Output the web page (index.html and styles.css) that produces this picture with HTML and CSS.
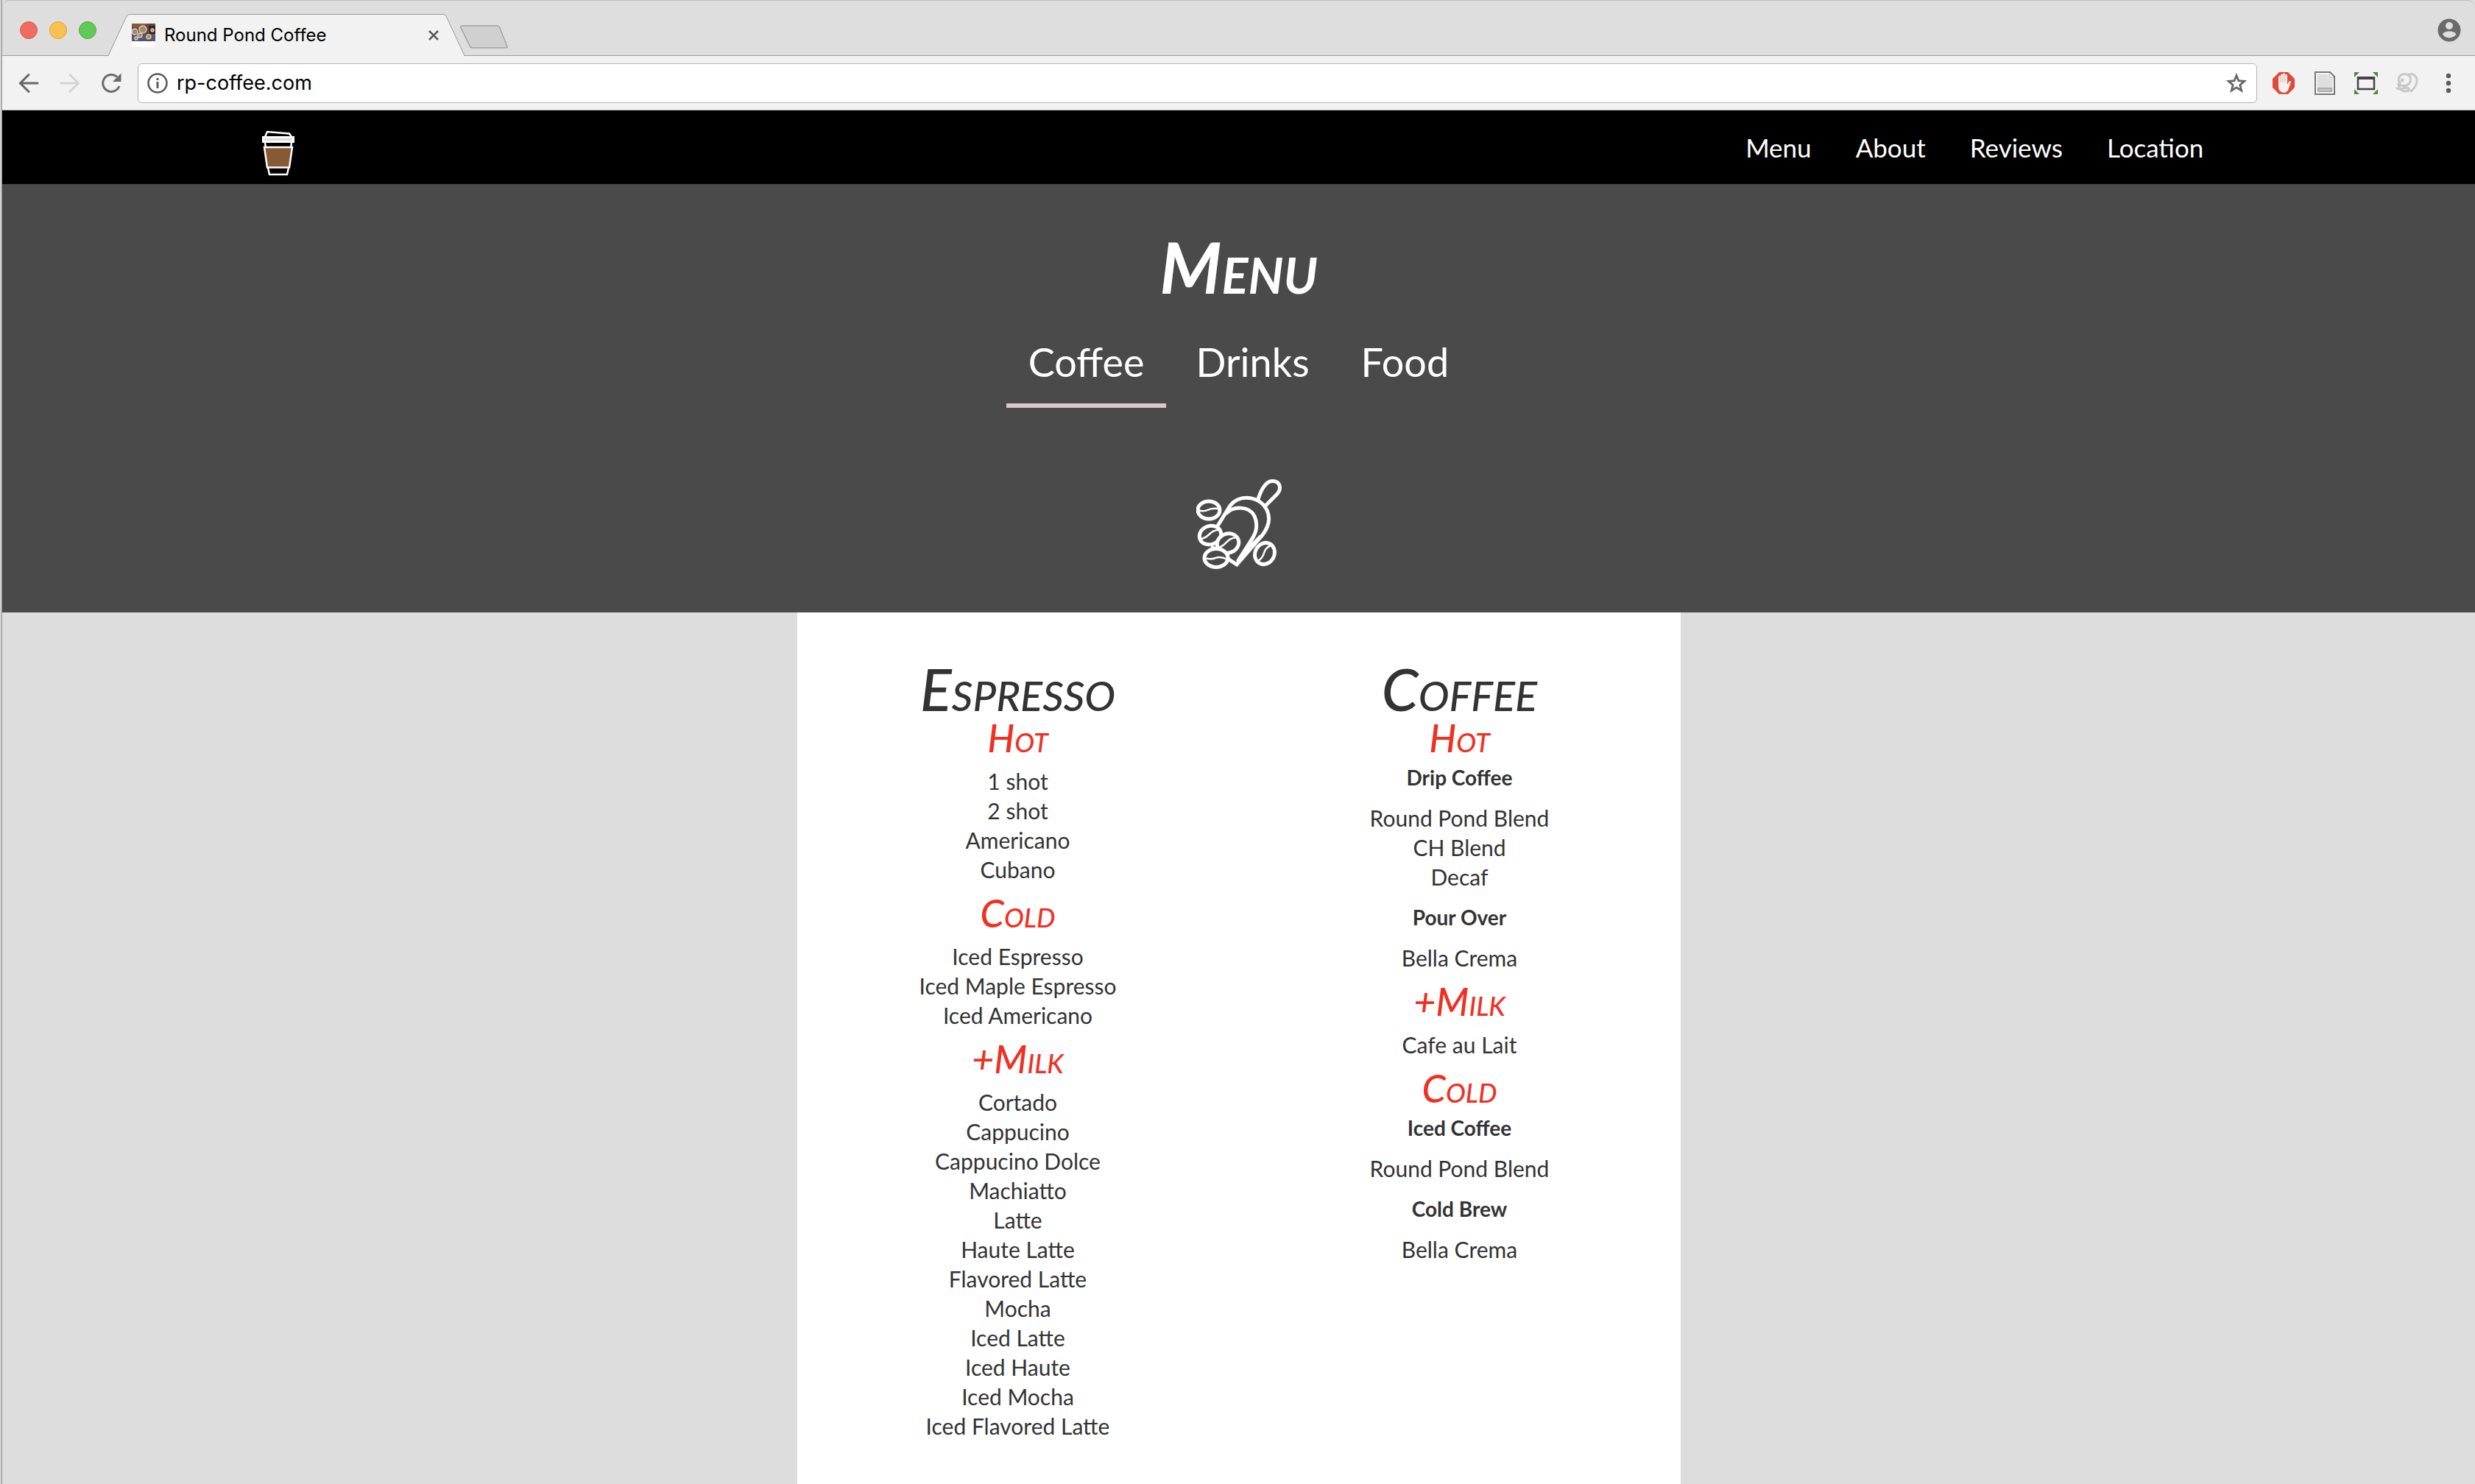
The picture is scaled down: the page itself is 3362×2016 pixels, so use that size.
FILE: index.html
```html
<!DOCTYPE html>
<html lang="en">
<head>
<meta charset="utf-8">
<title>Round Pond Coffee</title>
<link rel="stylesheet" href="styles.css">
</head>
<body>
<div class="window">
  <header class="chrome">
    <div class="tabstrip">
      <div class="lights">
        <button class="light light-close" aria-label="Close window"></button>
        <button class="light light-min" aria-label="Minimize"></button>
        <button class="light light-max" aria-label="Full screen"></button>
      </div>
      <div class="tab">
        <svg class="tab-shape" width="484" height="57" viewBox="0 0 484 57" aria-hidden="true"><path d="M0 57 L1 56 L25 3 Q26 .5 29 .5 H455 Q458 .5 459 3 L483 56 L484 57Z" fill="#f2f2f2"/><path d="M0 56.500 L25 3 Q26 .5 29 .5 H455 Q458 .5 459 3 L484 56.500" fill="none" stroke="#9a9a9a"/></svg>
        <svg class="favicon" width="32" height="32" viewBox="0 0 32 32" aria-hidden="true"><path fill="#fff" d="M0 0h32v32H0z"/><path fill="#5c4a48" d="M0 0h32v24H0z"/><path fill="#8a5a35" d="M0 0h22L12 6 0 4z"/><path fill="#401e1a" d="M23 3h9v11h-8z"/><path fill="#505a72" d="M0 15h8l3 9H0zM13 14l9 2-3 8h-6zM25 15h7v9h-5z"/><g fill="#a58a6b" stroke="#d8c9b5" stroke-width="1.500"><circle cx="4" cy="11" r="4"/><circle cx="15" cy="8" r="5"/><circle cx="11" cy="16" r="3"/><circle cx="23" cy="18" r="3"/><circle cx="6" cy="20" r="2"/><circle cx="28" cy="9" r="2"/></g></svg>
        <span class="tab-title">Round Pond Coffee</span>
        <button class="tab-close" aria-label="Close tab"><svg width="16" height="16" viewBox="0 0 16 16"><path d="M2 2l12 12M14 2L2 14" stroke="#5a5a5a" stroke-width="2.500"/></svg></button>
      </div>
      <button class="newtab" aria-label="New tab"><svg width="66" height="34" viewBox="0 0 66 34"><path d="M3 1H50Q53 1 54 4L64 29Q65 31 62 31H17Q14 31 13 28L1 4Q0 1 3 1Z" fill="#d0d0d0" stroke="#a2a2a2" stroke-width="1.500"/></svg></button>
      <button class="profile" aria-label="Profile"><svg width="32" height="32" viewBox="0 0 32 32"><circle cx="16" cy="16" r="15.500" fill="#6b6b6b"/><circle cx="16" cy="10" r="5" fill="#dedede"/><path d="M7 21.500C9 16 23 16 25.500 21.500C21 28 11 28 7 21.500Z" fill="#dedede"/></svg></button>
    </div>
    <div class="toolbar">
      <button class="tool" aria-label="Back"><svg width="28" height="28" viewBox="0 0 28 28" fill="none" stroke="#666" stroke-width="3" stroke-linecap="round"><path d="M26 14H3M14 2.500L2.500 14L14 25.500"/></svg></button>
      <button class="tool" aria-label="Forward" disabled><svg width="28" height="28" viewBox="0 0 28 28" fill="none" stroke="#d4d4d4" stroke-width="3" stroke-linecap="round"><path d="M2 14H25M14 2.500L25.500 14L14 25.500"/></svg></button>
      <button class="tool" aria-label="Reload"><svg width="28" height="28" viewBox="0 0 28 28"><path d="M22 5.500A11.500 11.500 0 1 0 25 18" fill="none" stroke="#6b6b6b" stroke-width="3"/><path d="M27.500 .5V12H16Z" fill="#6b6b6b"/></svg></button>
      <div class="omnibox">
        <svg width="28" height="28" viewBox="0 0 28 28" aria-hidden="true"><circle cx="14" cy="14" r="12.500" fill="none" stroke="#5a5a5a" stroke-width="2.500"/><path d="M12.500 7h3v3h-3zM12.500 12h3v9h-3z" fill="#5a5a5a"/></svg>
        <input class="url" type="text" value="rp-coffee.com" aria-label="Address">
        <button class="star" aria-label="Bookmark"><svg width="30" height="30" viewBox="0 0 30 30"><path d="M15 4.500L17.900 11.700L25.700 12.300L19.800 17.400L21.700 25L15 20.900L8.300 25L10.200 17.400L4.300 12.300L12.100 11.700Z" fill="none" stroke="#666" stroke-width="2.800"/></svg></button>
      </div>
      <div class="extensions">
        <button class="ext" aria-label="Ad blocker"><svg width="32" height="32" viewBox="0 0 32 32"><path d="M10 1H22L31 10V22L22 31H10L1 22V10Z" fill="#e14a38"/><path d="M9 20V7.500a1.500 1.500 0 0 1 3 0V5a1.500 1.500 0 0 1 3 0V4a1.500 1.500 0 0 1 3 0V5.500a1.500 1.500 0 0 1 3 0V18l2-4q1.500-2 3 0L23 23Q21 29 16 29Q9 28 9 20Z" fill="#f4f0ef"/><path d="M12 7v8M15 5v10M18 5v10" stroke="#d3b0ac"/></svg></button>
        <button class="ext" aria-label="Document"><svg width="32" height="32" viewBox="0 0 32 32"><path d="M3 1H23L29 7V31H3Z" fill="#fff" stroke="#777" stroke-width="2"/><path d="M5.500 3.500H20L21 9H26.500V28.500H5.500Z" fill="#dedede"/><path d="M22 2V8H28" fill="#fff" stroke="#aaa"/><path d="M7 23h18v4H7z" fill="#ccc" stroke="#aaa" stroke-width="2"/></svg></button>
        <button class="ext" aria-label="Resize window"><svg width="32" height="32" viewBox="0 0 32 32"><path d="M0 1H7L0 8ZM32 1H25L32 8ZM0 31H7L0 24ZM32 31H25L32 24Z" fill="#4d8a3d"/><path d="M5 9H27V24H5Z" fill="none" stroke="#444" stroke-width="2.500"/><path d="M4 7h24v4H4z" fill="#444"/></svg></button>
        <button class="ext" aria-label="Sketch"><svg width="32" height="32" viewBox="0 0 32 32" fill="none" stroke="#c8c8c8" stroke-width="3" stroke-linecap="round"><path d="M6 16C1 8 8 2 15 4C23 6 22 16 15 19C11 20 7 20 4 17M17 5C27 -1 36 14 21 27M2 23C6 25 12 24 14 20M4 18C5 26 11 27 15 27C20 27 19 21 15 23"/><circle cx="9" cy="12" r="1"/></svg></button>
        <button class="ext" aria-label="Browser menu"><svg width="32" height="32" viewBox="0 0 32 32" fill="#5a5a5a"><circle cx="16" cy="6" r="3.200"/><circle cx="16" cy="16" r="3.200"/><circle cx="16" cy="26" r="3.200"/></svg></button>
      </div>
    </div>
  </header>

  <nav class="sitenav">
    <div class="sitenav-inner">
      <a class="logo" href="#" aria-label="Round Pond Coffee"><svg width="44" height="62" viewBox="0 0 44 62" fill="none" stroke="#fff" stroke-width="2.500"><path d="M4 9L7 2L37 4.500L40 9"/><path d="M1.500 9.500H42.500V15.500H1.500Z" fill="#ddd" stroke-width="3"/><path d="M4 17L5 24M40 17L39 24M8 51L10 60H34L36 51"/><path d="M3 23H41L37 50.500H7Z" fill="#875a35"/></svg></a>
      <ul class="links">
        <li><a href="#menu">Menu</a></li>
        <li><a href="#about">About</a></li>
        <li><a href="#reviews">Reviews</a></li>
        <li><a href="#location">Location</a></li>
      </ul>
    </div>
  </nav>

  <section class="hero" id="menu">
    <h1 class="hero-title">Menu</h1>
    <div class="pills" role="tablist">
      <button class="pill pill-active" role="tab" aria-selected="true">Coffee</button>
      <button class="pill" role="tab" aria-selected="false">Drinks</button>
      <button class="pill" role="tab" aria-selected="false">Food</button>
    </div>
    <svg class="scoop" width="116" height="122" viewBox="0 0 116 122" fill="none" stroke="#fff" stroke-width="5" aria-hidden="true">
      <path d="M83 31C86 19 93 2 104 2.500C115 3 116 14 109 21L93 37"/>
      <path d="M28 65L46 36C58 20 86 22 96 42C102 55 97 67 89 77L55 116L43 108"/>
      <path d="M40 47C50 36 72 36 79 50C86 66 78 78 74 84L56 112M88 77L68 98"/>
      <path d="M20 92L28 95"/>
      <g fill="#4a4a4a"><ellipse cx="17" cy="42" rx="15" ry="12"/><ellipse cx="19" cy="76" rx="15" ry="12.500" transform="rotate(-20 19 76)"/><ellipse cx="43" cy="87" rx="15" ry="13" transform="rotate(-20 43 87)"/><ellipse cx="27" cy="107" rx="16" ry="12.500"/><ellipse cx="93" cy="101" rx="13" ry="15" transform="rotate(28 93 101)"/></g>
      <path d="M3 42C13 46 16 40 22 40Q28 39 32 41M6 81C18 80 18 68 32 69M30 93C42 90 40 80 55 79M12 107C22 111 25 106 31 106Q37 106 42 109M84 111C96 104 88 96 101 90" stroke-width="2.500"/>
    </svg>
  </section>

  <main class="page">
    <div class="panel">
      <section class="column">
        <h2 class="title">Espresso</h2>
        <h3 class="group">Hot</h3>
        <ul class="items"><li>1 shot</li><li>2 shot</li><li>Americano</li><li>Cubano</li></ul>
        <h3 class="group">Cold</h3>
        <ul class="items"><li>Iced Espresso</li><li>Iced Maple Espresso</li><li>Iced Americano</li></ul>
        <h3 class="group">+Milk</h3>
        <ul class="items"><li>Cortado</li><li>Cappucino</li><li>Cappucino Dolce</li><li>Machiatto</li><li>Latte</li><li>Haute Latte</li><li>Flavored Latte</li><li>Mocha</li><li>Iced Latte</li><li>Iced Haute</li><li>Iced Mocha</li><li>Iced Flavored Latte</li></ul>
      </section>
      <section class="column">
        <h2 class="title">Coffee</h2>
        <h3 class="group">Hot</h3>
        <h4 class="subgroup">Drip Coffee</h4>
        <ul class="items"><li>Round Pond Blend</li><li>CH Blend</li><li>Decaf</li></ul>
        <h4 class="subgroup">Pour Over</h4>
        <ul class="items"><li>Bella Crema</li></ul>
        <h3 class="group">+Milk</h3>
        <ul class="items"><li>Cafe au Lait</li></ul>
        <h3 class="group">Cold</h3>
        <h4 class="subgroup">Iced Coffee</h4>
        <ul class="items"><li>Round Pond Blend</li></ul>
        <h4 class="subgroup">Cold Brew</h4>
        <ul class="items"><li>Bella Crema</li></ul>
      </section>
    </div>
  </main>
</div>
</body>
</html>
```
FILE: styles.css
```css
* { box-sizing: border-box; }
body { margin: 0; background: #d2d2d2; color: #333; font-family: Lato, "Open Sans", sans-serif; font-size: 30px; }
button { padding: 0; border: 0; background: none; font: inherit; color: inherit; display: flex; align-items: center; justify-content: center; }
svg { display: block; flex: none; }
ul { list-style: none; margin: 0; padding: 0; }
a { color: inherit; text-decoration: none; }

.window { display: flex; flex-direction: column; min-height: 100vh; margin-left: 2px; border-left: 1px solid #8f8f8f; background: #ddd; }

/* Browser chrome */
.chrome { font-family: Inter, Roboto, sans-serif; color: #000; }
.tabstrip { display: flex; align-items: flex-end; height: 76px; background: #dedede; border-top: 1px solid #bdbdbd; box-shadow: inset 0 -1px #9a9a9a; border-radius: 10px 10px 0 0; }
.lights { display: flex; gap: 16px; align-self: center; padding: 4px 16px 0 24px; }
.light { width: 24px; height: 24px; border-radius: 50%; border: 1px solid #e0544b; background: #f06b60; }
.light-min { border-color: #dea03c; background: #f8c04f; }
.light-max { border-color: #4aa93c; background: #5fca56; }
.tab { position: relative; display: flex; align-items: center; width: 484px; height: 57px; padding: 0 34px 0 32px; }
.tab-shape { position: absolute; inset: 0; }
.favicon, .tab-title, .tab-close { position: relative; }
.tab-title { flex: 1; padding-left: 12px; font-size: 24px; }
.newtab { align-self: center; margin-left: -6px; padding-top: 24px; }
.profile { align-self: center; margin: 4px 19px 0 auto; }
.toolbar { display: flex; align-items: center; height: 74px; padding: 0 20px 0 22px; background: #f2f2f2; border-bottom: 1px solid #b5b5b5; }
.tool { margin-right: 28px; }
.tool + .tool + .tool { margin-right: 22px; }
.omnibox { flex: 1; display: flex; align-items: center; height: 54px; padding: 0 12px; background: #fff; border: 1px solid #b3b3b3; border-radius: 6px; }
.url { flex: 1; min-width: 0; padding: 0 12px; border: 0; outline: 0; background: none; font: 27px Inter, Roboto, sans-serif; color: #000; }
.extensions { display: flex; gap: 24px; padding-left: 20px; }

/* Site navigation */
.sitenav { height: 100px; background: #000; color: #fff; }
.sitenav-inner { display: flex; align-items: center; justify-content: space-between; width: 79%; height: 100%; margin: 0 auto; padding: 0 16px 0 0; }
.logo { padding-top: 16px; }
.links { display: flex; gap: 60px; font-size: 35px; }

/* Hero */
.hero { display: flex; flex-direction: column; align-items: center; height: 582px; padding-top: 52px; background: #4a4a4a; color: #fff; }
.hero-title { margin: 0 0 24px; font-size: 96px; line-height: 120px; font-weight: 700; font-style: italic; font-variant: small-caps; }
.pills { display: flex; gap: 10px; }
.pill { height: 108px; padding: 0 30px 12px; border-bottom: 6px solid transparent; font-size: 54px; }
.pill-active { border-color: #dbc8ca; }
.scoop { margin-top: 97px; }

/* Menu */
.page { flex: 1; display: flex; justify-content: center; }
.panel { display: flex; width: 1200px; padding: 75px 0 56px; background: #fff; }
.column { flex: 1; text-align: center; }
.title, .group { font-style: italic; font-variant: small-caps; }
.title { margin: 0; font-size: 80px; line-height: 56px; font-weight: 500; }
.group { margin: 20px 0; font-size: 52px; line-height: 38px; font-weight: 500; color: #ef3124; }
.subgroup { margin: 20px 0; font-size: 28px; line-height: 30px; font-weight: 700; }
.items { line-height: 40px; }
```
